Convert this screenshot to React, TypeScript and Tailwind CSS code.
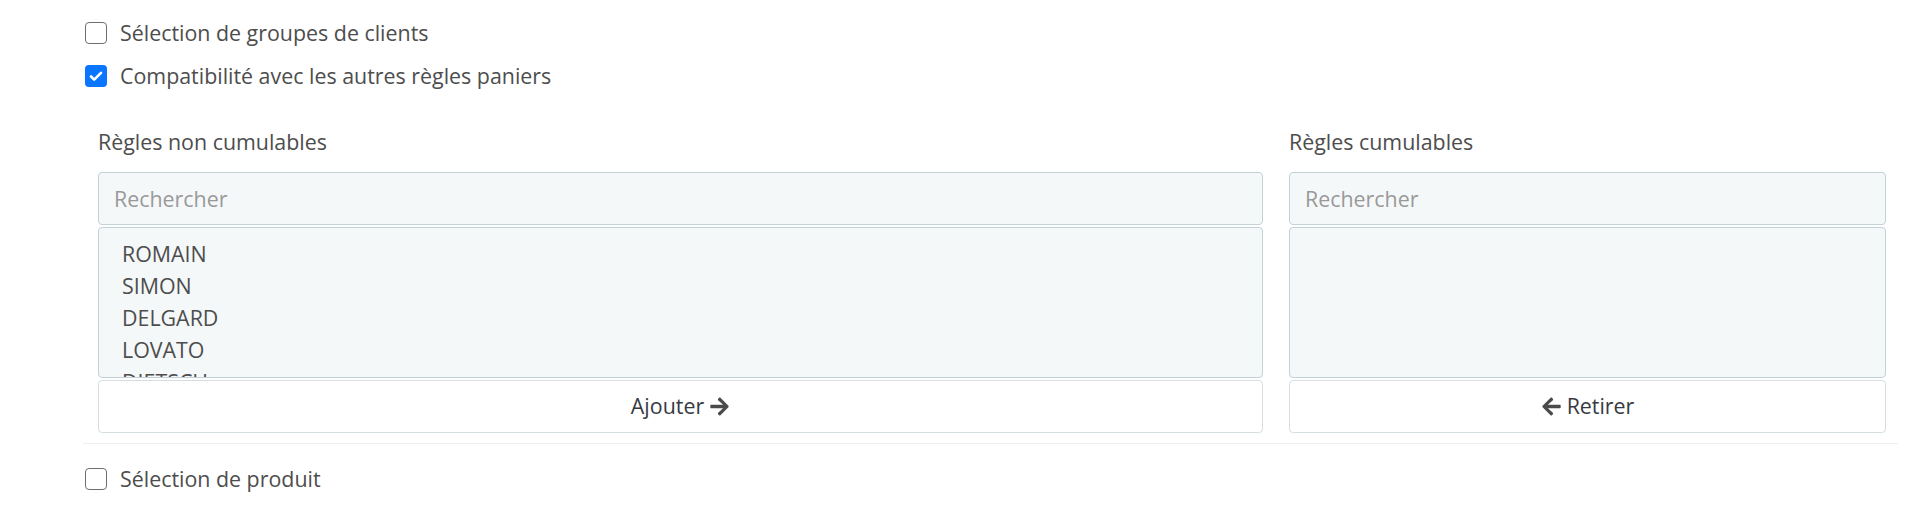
import React from 'react';
import { FaArrowRight, FaArrowLeft } from 'react-icons/fa';

const Checkbox: React.FC<{ checked?: boolean; label: string }> = ({ checked, label }) => (
    <label className="flex items-center gap-[13px] h-[30px]">
        {checked ? (
            <span className="w-[22px] h-[22px] rounded-[4px] bg-[#0a75ff] flex items-center justify-center">
                <svg viewBox="0 0 16 16" className="w-[16px] h-[16px]">
                    <path d="M3 8.5l3.2 3.2L13 4.8" fill="none" stroke="white" strokeWidth="2.6" strokeLinecap="round" strokeLinejoin="round" />
                </svg>
            </span>
        ) : (
            <span className="w-[22px] h-[22px] rounded-[4px] border-[1.5px] border-[#6e6e6e] bg-white" />
        )}
        <span>{label}</span>
    </label>
);

const names = ['ROMAIN', 'SIMON', 'DELGARD', 'LOVATO', 'DIETSCH'];

const App: React.FC = () => {
    return (
        <div className="min-h-screen bg-white text-[#4d4d4d] text-[21.4px] font-['Open_Sans',sans-serif] pl-[85px] pr-[21px]">
            {/* Customer groups / compatibility */}
            <div className="pt-[18px] flex flex-col gap-[13px]">
                <Checkbox label="Sélection de groupes de clients" />
                <Checkbox checked label="Compatibilité avec les autres règles paniers" />
            </div>

            {/* Dual list */}
            <div className="grid grid-cols-[1165px_597px] gap-x-[26px] pl-[13px] pt-[36px]">
                {[
                    { title: 'Règles non cumulables', items: names, btn: 'add' },
                    { title: 'Règles cumulables', items: [] as string[], btn: 'remove' },
                ].map((col) => (
                    <div key={col.title} className="flex flex-col">
                        <div className="h-[30px] leading-[30px] mb-[15px]">{col.title}</div>
                        <input
                            placeholder="Rechercher"
                            className="h-[53px] px-[15px] bg-[#f5f8f9] border border-[#c2d3d8] rounded-[4px] text-[21.4px] placeholder-[#999] outline-none"
                        />
                        <div className="mt-[2px] h-[151px] overflow-hidden bg-[#f5f8f9] border border-[#c2d3d8] rounded-[4px] pt-[10px] pl-[23px] text-[#4d4d4d]">
                            {col.items.map((n) => (
                                <div key={n} className="leading-[32px]">{n}</div>
                            ))}
                        </div>
                        <button className="mt-[2px] h-[53px] bg-white border border-[#d5dfe2] rounded-[4px] text-[#363a41] flex items-center justify-center gap-[5px]">
                            {col.btn === 'add' ? (
                                <>
                                    <span>Ajouter</span>
                                    <FaArrowRight className="w-[21px] h-[21px] text-[#4a4a4a]" />
                                </>
                            ) : (
                                <>
                                    <FaArrowLeft className="w-[21px] h-[21px] text-[#4a4a4a]" />
                                    <span>Retirer</span>
                                </>
                            )}
                        </button>
                    </div>
                ))}
            </div>

            <div className="mt-[10px] -ml-[2px] border-t border-[#eee]" />

            <div className="pt-[20px]">
                <Checkbox label="Sélection de produit" />
            </div>
        </div>
    );
};

export default App;
